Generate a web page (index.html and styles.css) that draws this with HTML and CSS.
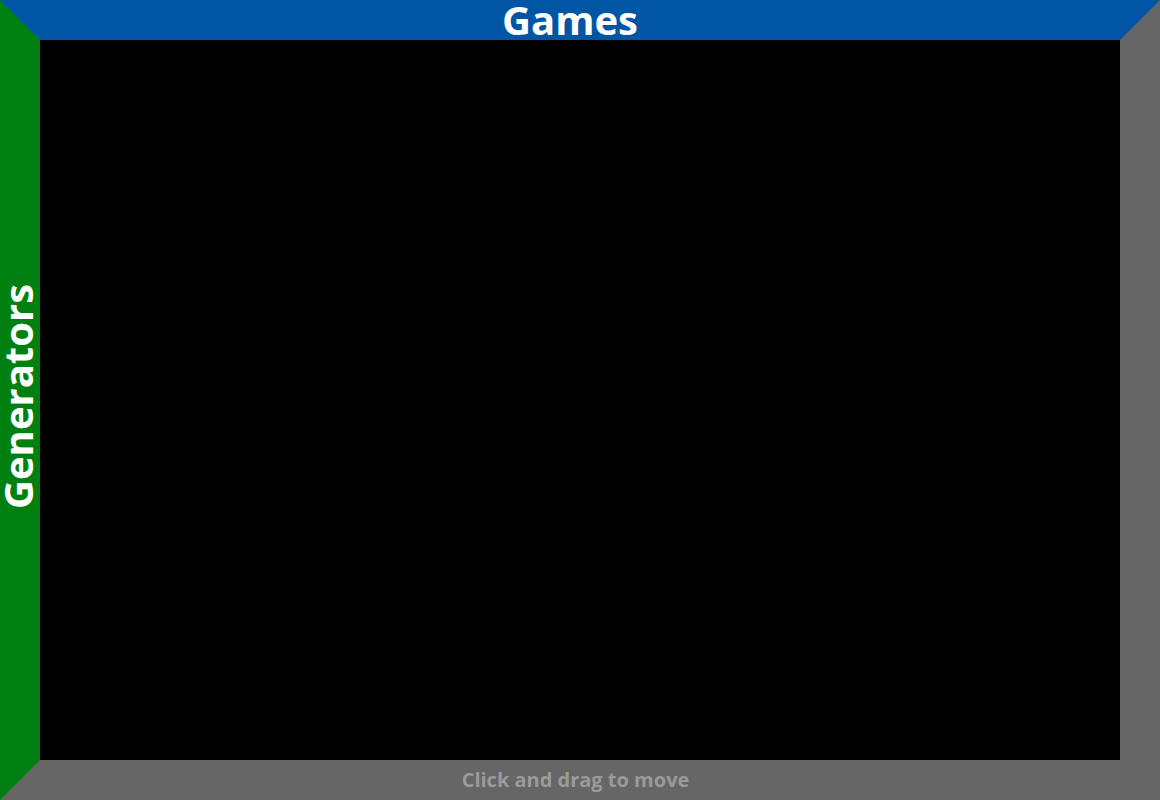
FILE: index.html
```html
<!DOCTYPE html>
<html>
<head>
<meta charset="utf-8">
<link rel="stylesheet" href="styles.css">
</head>
<body>
<div class="frame">
  <div class="label label-top">Games</div>
  <div class="label label-left">Generators</div>
  <div class="label label-bottom">Click and drag to move</div>
  <div class="canvas"></div>
</div>
</body>
</html>
```
FILE: styles.css
```css
html, body {
  margin: 0;
  padding: 0;
  background: #000;
}
.frame {
  position: relative;
  box-sizing: border-box;
  width: 1160px;
  height: 800px;
  border-style: solid;
  border-width: 40px;
  border-top-color: #0055a5;
  border-left-color: #008011;
  border-right-color: #666666;
  border-bottom-color: #666666;
  font-family: "Open Sans", "Liberation Sans", sans-serif;
  font-weight: 700;
}
.canvas {
  width: 100%;
  height: 100%;
  background: #000;
}
.label {
  position: absolute;
  white-space: nowrap;
  line-height: 1;
  display: flex;
  align-items: center;
  justify-content: center;
}
.label-top {
  top: -40px;
  left: -40px;
  width: 1140px;
  height: 40px;
  color: #fff;
  font-size: 40px;
}
.label-left {
  top: -40px;
  left: -42px;
  width: 40px;
  height: 792px;
  color: #fff;
  font-size: 40px;
  writing-mode: vertical-rl;
  transform: rotate(180deg);
}
.label-bottom {
  bottom: -40px;
  left: -40px;
  width: 1151px;
  height: 40px;
  color: #9a9a9a;
  font-size: 20px;
}
```
